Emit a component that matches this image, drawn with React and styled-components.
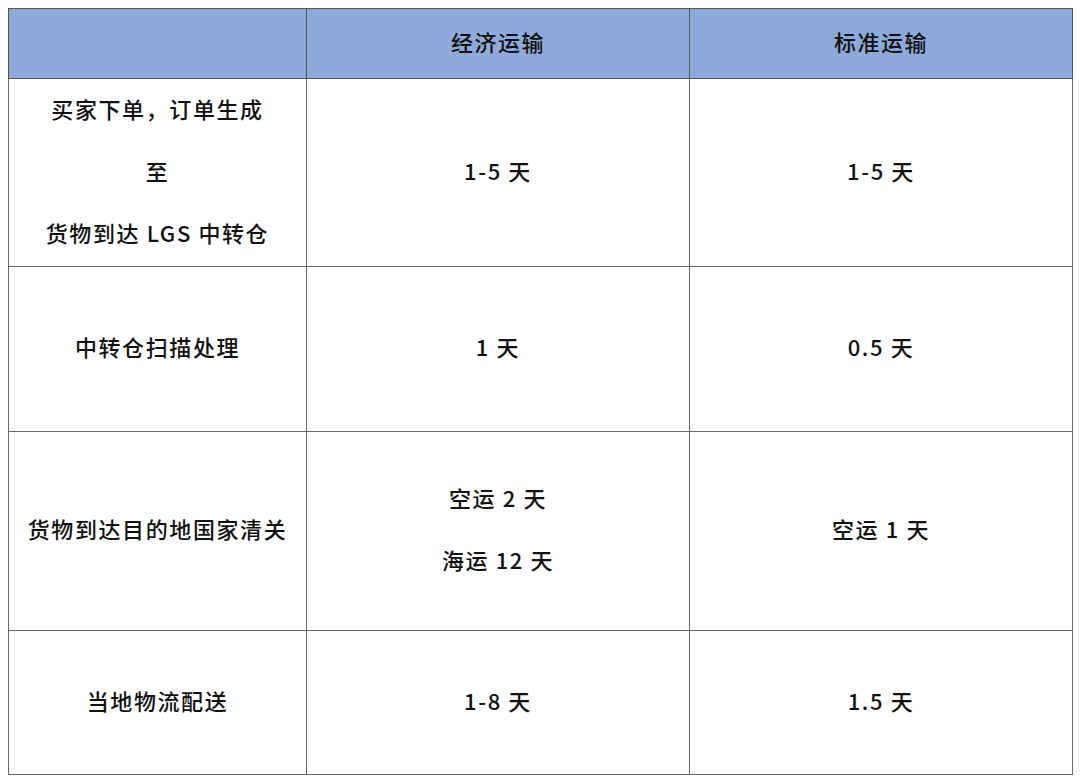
import React from 'react'
import styled, { createGlobalStyle } from 'styled-components'

const GlobalStyle = createGlobalStyle`
	html, body {
		margin: 0;
		padding: 0;
		background: #ffffff;
	}
	body {
		padding: 8px;
		font-family: 'Noto Sans CJK SC', 'Noto Sans', sans-serif;
		color: #111111;
	}
`

const Table = styled('table')`
	width: 1065px;
	border-collapse: collapse;
	table-layout: fixed;
	border: 1px solid #555555;

	col.first {
		width: 298px;
	}
`

const HeadCell = styled('th')`
	height: 64px;
	background: #8eaadb;
	border: 1px solid #555555;
	font-size: 22px;
	font-weight: 500;
	letter-spacing: 1.5px;
	line-height: 30px;
	text-align: center;
	vertical-align: middle;
	padding: 0 0 5px;
`

const Row = styled('tr')`
	height: ${({ h }) => h}px;
`

const Cell = styled('td')`
	border: 1px solid #666666;
	text-align: center;
	vertical-align: middle;
	padding: 0;
	font-size: 22px;
	font-weight: 500;
	letter-spacing: 1.6px;
`

const Line = styled('div')`
	line-height: 56px;
	padding-bottom: 6px;
`

const rows = [
	{ h: 188, label: ['买家下单，订单生成', '至', '货物到达 LGS 中转仓'], eco: ['1-5 天'], std: ['1-5 天'] },
	{ h: 165, label: ['中转仓扫描处理'], eco: ['1 天'], std: ['0.5 天'] },
	{ h: 199, label: ['货物到达目的地国家清关'], eco: ['空运 2 天', '海运 12 天'], std: ['空运 1 天'] },
	{ h: 144, label: ['当地物流配送'], eco: ['1-8 天'], std: ['1.5 天'] },
]

const Lines = ({ items }) => items.map((t, i) => <Line key={i}>{t}</Line>)

const App = () => {
	return (
		<>
			<GlobalStyle />
			<Table>
				<colgroup>
					<col className="first" />
					<col />
					<col />
				</colgroup>
				<thead>
					<tr>
						<HeadCell />
						<HeadCell>经济运输</HeadCell>
						<HeadCell>标准运输</HeadCell>
					</tr>
				</thead>
				<tbody>
					{rows.map((r, i) => (
						<Row key={i} h={r.h}>
							<Cell>
								<Lines items={r.label} />
							</Cell>
							<Cell>
								<Lines items={r.eco} />
							</Cell>
							<Cell>
								<Lines items={r.std} />
							</Cell>
						</Row>
					))}
				</tbody>
			</Table>
		</>
	)
}

export default App
